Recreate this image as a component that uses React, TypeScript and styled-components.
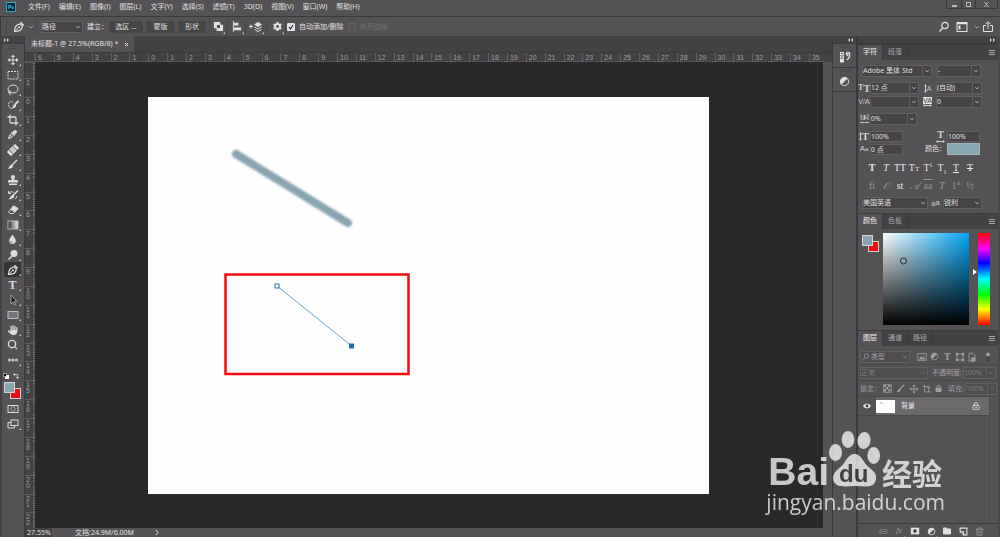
import React from "react";
import styled, { createGlobalStyle, css } from "styled-components";
import {
  FaBandage,
  FaDroplet,
  FaEyeDropper,
  FaFolder,
  FaGear,
  FaHand,
  FaLock,
} from "react-icons/fa6";
import { Crop, EllipsisIcon, Lasso, Link2, LockKeyhole, Search, Trash2 } from "lucide-react";

const c = {
  panel: "#545255",
  bar: "#434144",
  line: "#3b393c",
  field: "#454346",
  fieldLine: "#605e61",
  canvas: "#2a282b",
  text: "#e2e0e2",
  dim: "#a09ea1",
  faint: "#7d7b7e",
  swatch: "#88a5b2",
  red: "#f20a0c",
};

const Global = createGlobalStyle`
  *, *::before, *::after { box-sizing: border-box; }
  body {
    margin: 0;
    background: ${c.panel};
    color: ${c.text};
    font: 7px/12px "Noto Sans", "Noto Sans CJK SC", sans-serif;
  }
  button, input, select {
    font: inherit;
    color: inherit;
    margin: 0;
    padding: 0;
    border: 0;
    background: none;
    border-radius: 0;
  }
  svg { display: block; flex: none; }
`;

const Window = styled.div`
  position: relative;
  display: flex;
  flex-direction: column;
  min-height: 100vh;
  overflow: hidden;
`;

/* ---------- menu bar ---------- */

const MenuBar = styled.header`
  display: flex;
  align-items: center;
  height: 16px;
  padding-left: 6px;
  padding-bottom: 3px;
`;

const Menus = styled.nav`
  display: flex;
  flex: 1;
  gap: 9px;
  padding-left: 12px;
`;

const MenuItem = styled.button`
  white-space: nowrap;
  line-height: 12px;
`;

const WindowButtons = styled.div`
  display: flex;
  align-self: flex-start;
  height: 9px;
  margin-right: 2px;
  border: 1px solid ${c.line};
  border-top: 0;
`;

const WindowButton = styled.button<{ $w: number }>`
  display: grid;
  place-items: center;
  width: ${(p) => p.$w}px;
  color: #bab8bb;
  & + & {
    border-left: 1px solid ${c.line};
  }
`;

/* ---------- options bar ---------- */

const OptionsBar = styled.div`
  display: flex;
  align-items: center;
  height: 20px;
  padding: 0 6px 0 5px;
  border-top: 1px solid ${c.line};
  border-left: 1px solid ${c.line};
`;

const Divider = styled.span<{ $before?: number; $after?: number }>`
  width: 1px;
  height: 14px;
  margin: 0 ${(p) => p.$after ?? 0}px 0 ${(p) => p.$before ?? 0}px;
  background: #474548;
`;

const OptionButton = styled.button<{ $w: number }>`
  width: ${(p) => p.$w}px;
  height: 12px;
  margin-right: 3px;
  border: 1px solid #4a484b;
  border-radius: 1px;
  background: ${c.field};
  line-height: 10px;
  white-space: nowrap;
`;

const OptionLabel = styled.span`
  padding: 0 1px 0 4px;
  white-space: nowrap;
`;

const IconButton = styled.button<{ $w?: number; $dim?: boolean; $corner?: boolean }>`
  position: relative;
  display: grid;
  place-items: center;
  width: ${(p) => p.$w ?? 14}px;
  height: 14px;
  color: ${(p) => (p.$dim ? c.dim : "#e2e0e2")};
  ${(p) =>
    p.$corner &&
    css`
      &::after {
        content: "";
        position: absolute;
        right: 1px;
        bottom: 0;
        border: 1px solid;
        border-color: transparent #cfcdcf #cfcdcf transparent;
      }
    `}
`;

const CheckLabel = styled.label<{ $off?: boolean }>`
  display: flex;
  align-items: center;
  gap: 4px;
  margin-right: 4px;
  white-space: nowrap;
  color: ${(p) => (p.$off ? "#757376" : c.text)};
`;

const Check = styled.input`
  appearance: none;
  width: 8px;
  height: 8px;
  border: 1px solid #626063;
  border-radius: 1px;
  &:checked {
    border-color: #e6e4e6;
    background: #e6e4e6;
  }
`;

const CheckBox = styled.span`
  display: grid;
  > * {
    grid-area: 1 / 1;
  }
  svg {
    pointer-events: none;
  }
`;

const Spacer = styled.span`
  flex: 1;
`;

/* ---------- work area ---------- */

const Work = styled.div`
  flex: 1;
  display: grid;
  grid-template-columns: 25px minmax(0, 1fr) 24px 143px;
`;

const CollapseBar = styled.div<{ $end?: boolean }>`
  display: flex;
  align-items: center;
  justify-content: ${(p) => (p.$end ? "flex-end" : "flex-start")};
  height: 8px;
  flex: none;
  padding: 0 3px 0 2px;
  background: ${c.bar};
  border-bottom: 1px solid ${c.line};
`;

const ToolBox = styled.aside`
  display: flex;
  flex-direction: column;
  border-left: 2px solid ${c.bar};
  border-right: 1px solid ${c.line};
  background: ${c.panel};
`;

const Grip = styled.i`
  align-self: center;
  width: 10px;
  height: 3px;
  margin: 2px 0 3px;
  border: solid #49474a;
  border-width: 1px 0;
`;

const Tool = styled.button<{ $on?: boolean; $corner?: boolean }>`
  position: relative;
  display: grid;
  place-items: center;
  width: 17px;
  height: 15px;
  margin-left: 2px;
  border-radius: 1px;
  color: #dddbdd;
  background: ${(p) => (p.$on ? "#373538" : "none")};
  ${(p) =>
    p.$corner &&
    css`
      &::after {
        content: "";
        position: absolute;
        right: 0;
        bottom: 1px;
        border: 1px solid;
        border-color: transparent #cfcdcf #cfcdcf transparent;
      }
    `}
`;

const ToolLetter = styled.b`
  font: bold 12px/12px "Liberation Serif", serif;
`;

const HealingIcon = styled(FaBandage)`
  transform: rotate(-45deg);
`;

const SwatchPair = styled.div`
  display: grid;
  grid-template-columns: 6px 5px 6px;
  grid-template-rows: 6px 5px 6px;
  width: 17px;
  margin: 2px 0 2px 2px;
`;

const Swatch = styled.button<{ $front?: boolean }>`
  grid-area: ${(p) => (p.$front ? "1 / 1 / 3 / 3" : "2 / 2 / 4 / 4")};
  z-index: ${(p) => (p.$front ? 1 : 0)};
  border: 1px solid #cfd5d8;
  background: ${(p) => (p.$front ? c.swatch : c.red)};
`;

const MiniRow = styled.div`
  display: flex;
  justify-content: space-between;
  width: 16px;
  height: 9px;
  margin: 4px 0 0 1px;
  padding: 2px 0;
`;

/* ---------- document ---------- */

const DocumentArea = styled.main`
  display: flex;
  flex-direction: column;
  background: ${c.bar};
  border-right: 1px solid ${c.line};
`;

const DocumentTabs = styled.div`
  display: flex;
  height: 17px;
  border-bottom: 1px solid ${c.line};
`;

const DocumentTab = styled.div`
  display: flex;
  align-items: center;
  gap: 6px;
  padding: 0 5px 0 6px;
  background: ${c.panel};
  white-space: nowrap;
`;

const CloseButton = styled.button`
  display: grid;
  place-items: center;
  width: 5px;
  height: 10px;
`;

const View = styled.div`
  flex: 1;
  display: grid;
  grid-template-columns: 10px minmax(0, 1fr) 9px;
  grid-template-rows: 9px minmax(0, 1fr) 9px;
`;

const rulerText = css`
  color: #9d9b9e;
  font: 7px/6px "Liberation Sans", sans-serif;
`;

const TopRuler = styled.div`
  ${rulerText}
  display: flex;
`;

const TopCell = styled.span<{ $part?: number }>`
  flex: ${(p) => p.$part ?? 1} 1 0;
  min-width: 0;
  padding: 2px 0 0 2px;
  border-left: 1px solid #5f5d60;
  background: linear-gradient(to right, #777578 1px, transparent 1px) 0 100% / 12% 1px repeat-x;
`;

const LeftRuler = styled.div`
  ${rulerText}
  display: flex;
  flex-direction: column;
`;

const LeftCell = styled.span<{ $part?: number }>`
  display: flex;
  flex-direction: column;
  flex: ${(p) => p.$part ?? 1} 1 0;
  min-height: 0;
  overflow: hidden;
  padding: 1px 0 0 1px;
  border-top: 1px solid #5f5d60;
  background: linear-gradient(to bottom, #777578 1px, transparent 1px) 100% 0 / 2px 12% repeat-y;
`;

const RulerCorner = styled.span`
  border: dotted #5f5d60;
  border-width: 0 1px 1px 0;
`;

const ScrollTrack = styled.div`
  grid-row: 1 / 4;
  grid-column: 3;
  background: linear-gradient(${c.bar} 9px, ${c.panel} 9px);
`;

const Canvas = styled.div`
  overflow: hidden;
  padding: 35px 0 0 113px;
  background: ${c.canvas};
`;

const Paper = styled.svg`
  background: #fffeff;
`;

const StatusBar = styled.footer`
  grid-column: 1 / 3;
  display: flex;
  align-items: center;
  background: ${c.panel};
  overflow: hidden;
  line-height: 9px;
  white-space: nowrap;
`;

const ZoomField = styled.input`
  width: 27px;
  height: 9px;
  padding-left: 2px;
  background: ${c.bar};
`;

const DocumentInfo = styled.span`
  width: 78px;
  margin-left: 23px;
`;

/* ---------- right side ---------- */

const Dock = styled.aside`
  display: flex;
  flex-direction: column;
  border-right: 1px solid ${c.line};
  background: ${c.panel};
`;

const DockGroup = styled.div`
  display: flex;
  flex-direction: column;
  align-items: center;
  height: 24px;
  border-bottom: 1px solid ${c.line};
`;

const DockGrip = styled(Grip)`
  margin: 1px 0 2px;
`;

const Panels = styled.aside`
  display: flex;
  flex-direction: column;
  border-left: 1px solid ${c.line};
  border-right: 2px solid #49474a;
  background: ${c.panel};
`;

const TabRow = styled.div`
  display: flex;
  flex: none;
  height: 16px;
  background: ${c.bar};
  border-top: 1px solid ${c.line};
`;

const Tab = styled.button<{ $on?: boolean }>`
  padding: 0 5px 1px;
  color: ${(p) => (p.$on ? "#f4f2f4" : "#a9a7aa")};
  background: ${(p) => (p.$on ? c.panel : "none")};
  border-right: 1px solid ${c.line};
`;

const MenuButton = styled.button`
  display: grid;
  place-items: center;
  width: 7px;
  margin: 0 3px 0 auto;
  color: #a8a6a9;
`;

const CharacterBody = styled.div`
  display: flex;
  flex-direction: column;
  height: 153px;
  padding-top: 5px;
`;

const Row = styled.div<{ $after?: number }>`
  display: flex;
  align-items: center;
  height: 12px;
  margin-bottom: ${(p) => p.$after ?? 2}px;
`;

const FieldIcon = styled.span<{ $w?: number }>`
  display: grid;
  place-items: center;
  width: ${(p) => p.$w ?? 12}px;
  flex: none;
  color: #d2d0d2;
`;

const SelectBox = styled.span<{ $w: number; $dim?: boolean; $plain?: boolean }>`
  display: grid;
  grid-template-columns: minmax(0, 1fr) 9px;
  flex: none;
  width: ${(p) => p.$w}px;
  height: 12px;
  border: 1px solid ${c.fieldLine};
  background: ${(p) => (p.$dim ? "#4f4d50" : c.field)};
  color: ${(p) => (p.$dim ? c.faint : c.text)};
  select {
    grid-area: 1 / 1 / 2 / 3;
    appearance: none;
    min-width: 0;
    height: 10px;
    line-height: 10px;
  }
  svg {
    grid-area: 1 / 2;
    width: 9px;
    height: 10px;
    pointer-events: none;
    border-left: 1px solid ${(p) => (p.$plain ? "transparent" : "#5e5c5f")};
  }
`;

const TextField = styled.input<{ $w: number }>`
  width: ${(p) => p.$w}px;
  height: 11px;
  border: 1px solid ${c.fieldLine};
  background: ${c.field};
  line-height: 9px;
`;

const ColorField = styled.button`
  width: 33px;
  height: 12px;
  border: 1px solid #9fb4be;
  background: ${c.swatch};
`;

const GlyphRow = styled.div`
  display: flex;
  padding-left: 7px;
  height: 18px;
`;

const GlyphButton = styled.button<{ $on?: boolean; $bold?: boolean; $italic?: boolean; $line?: string }>`
  width: 14px;
  height: 14px;
  color: ${(p) => (p.$on ? "#e8e6e8" : "#99979a")};
  font: ${(p) => (p.$italic ? "italic" : "normal")} ${(p) => (p.$bold ? "bold" : "normal")} 10px/14px
    "Liberation Serif", "DejaVu Serif", serif;
  text-decoration: ${(p) => p.$line ?? "none"};
  white-space: nowrap;
  small {
    font-size: 7px;
  }
  sup,
  sub {
    font-size: 6px;
    line-height: 0;
  }
`;

const ColorBody = styled.div`
  display: flex;
  align-items: flex-start;
  height: 101px;
  padding: 4px 0 0 2px;
`;

const ColorField2D = styled.div`
  width: 86px;
  height: 92px;
  margin-left: 4px;
  background: linear-gradient(to bottom, transparent, #000), linear-gradient(to right, #fff, #00a6f6);
`;

const HueMarker = styled.div`
  padding: 36px 1px 0 4px;
`;

const HueSlider = styled.input`
  appearance: none;
  writing-mode: vertical-lr;
  width: 12px;
  height: 92px;
  background: linear-gradient(#f00, #f0f 17%, #00f 33%, #0ff 50%, #0f0 67%, #ff0 83%, #f00);
  &::-webkit-slider-thumb {
    appearance: none;
    width: 1px;
    height: 1px;
  }
`;

const LayerRows = styled.div`
  padding-top: 3px;
`;

const LayerRow = styled.div`
  display: flex;
  align-items: center;
  height: 16px;
  padding-left: 2px;
  border-bottom: 1px solid #49474a;
  color: ${c.dim};
  white-space: nowrap;
`;

const LayerList = styled.div`
  flex: 1;
  margin-right: 8px;
  border-right: 1px solid #4c4a4d;
`;

const Layer = styled.div`
  display: flex;
  align-items: center;
  height: 19px;
  background: #6b696c;
  border-bottom: 1px solid #49474a;
  color: #f0eef0;
`;

const Eye = styled.button`
  display: grid;
  place-items: center;
  width: 18px;
  height: 18px;
  background: ${c.panel};
`;

const LayerName = styled.span`
  flex: 1;
  padding-left: 6px;
`;

const LayerActions = styled.div`
  display: flex;
  justify-content: flex-end;
  gap: 2px;
  height: 14px;
  padding-right: 12px;
  border-top: 1px solid ${c.line};
`;

/* ---------- watermark ---------- */

const Watermark = styled.div`
  position: absolute;
  right: 55px;
  bottom: 20px;
  display: flex;
  flex-direction: column;
  align-items: flex-end;
  color: #fff;
  opacity: 0.74;
  pointer-events: none;
`;

const WatermarkLogo = styled.div`
  display: flex;
  align-items: baseline;
  height: 56px;
  padding-right: 3px;
  font: bold 39px/56px "Liberation Sans", sans-serif;
  svg {
    overflow: visible;
  }
  b {
    font: bold 30px/40px "Noto Sans CJK SC", sans-serif;
    padding-left: 2px;
  }
`;

const WatermarkUrl = styled.div`
  font: 21px/30px "Open Sans", sans-serif;
`;

/* ---------- glyphs ---------- */

const G = ({ s = 12, v = 12, children }: { s?: number; v?: number; children: React.ReactNode }) => (
  <svg width={s} height={s} viewBox={`0 0 ${v} ${v}`} fill="none" stroke="currentColor" strokeWidth="1" aria-hidden="true">
    {children}
  </svg>
);

const Chevron = () => (
  <G s={10} v={10}>
    <path d="M3 4l2 2 2-2" />
  </G>
);

const Double = ({ left }: { left?: boolean }) => (
  <svg width="5" height="4" viewBox="0 0 5 4" fill="#d8d6d8" aria-hidden="true">
    {left ? <path d="M2 0v4L0 2zM5 0v4L3 2z" /> : <path d="M0 0v4l2-2zM3 0v4l2-2z" />}
  </svg>
);

const PenGlyph = () => (
  <G>
    <path d="M1.500 10.500C1.500 6 3 3.500 7 2.800l2.300 2.300C9 9 6 10.500 1.500 10.500z" strokeWidth="1.200" />
    <path d="M1.500 10.500L5.500 6.700" />
    <path d="M7.500 1.300l3.200 3.200" strokeWidth="1.600" />
    <circle cx="6" cy="6.200" r="1" fill="currentColor" stroke="none" />
  </G>
);

const Burger = () => (
  <svg width="6" height="6" viewBox="0 0 6 6" fill="currentColor" aria-hidden="true">
    <path d="M0 0h6v1H0zM0 2h6v1H0zM0 4h6v1H0z" />
  </svg>
);

const HalfCircle = ({ s = 10 }: { s?: number }) => (
  <G s={s}>
    <circle cx="6" cy="6" r="4.500" />
    <path d="M9.500 2.500A5 5 0 0 0 2.500 9.500z" fill="currentColor" stroke="none" />
  </G>
);

const MoveGlyph = ({ s = 12 }: { s?: number }) => (
  <G s={s}>
    <path d="M6 2v8M2 6h8" />
    <path d="M6 .5l2 2.500H4zM6 11.500L4 9h4zM.5 6L3 4v4zM11.500 6L9 8V4z" fill="currentColor" stroke="none" />
  </G>
);

const BrushGlyph = ({ s = 12 }: { s?: number }) => (
  <G s={s}>
    <path d="M11 1L5.500 6.500" strokeWidth="1.600" />
    <path d="M5 6c1 .3 1.500 1 1.500 2C5.500 10.500 3 11 1 10.500 2.500 9.500 2.500 7 5 6z" fill="currentColor" stroke="none" />
  </G>
);

const tools: { name: string; corner?: boolean; on?: boolean; icon: React.ReactNode }[] = [
  { name: "移动", corner: true, icon: <MoveGlyph /> },
  { name: "矩形选框", corner: true, icon: <G><rect x="1" y="2.500" width="10" height="7.500" strokeDasharray="2 1" /></G> },
  { name: "套索", corner: true, icon: <Lasso size={12} strokeWidth={2} /> },
  {
    name: "快速选择",
    corner: true,
    icon: (
      <G>
        <path d="M6 3.500C4 1.500 1.500 3 1.500 5.500S3 10 5 9.500" strokeDasharray="1.500 .7" />
        <path d="M11.500 2L8 5.500" strokeWidth="1.800" />
        <path d="M8 5c1 .5 1.200 1.200 1 2-.8 2-2.500 2.500-4.500 2C6 8.200 6 5.800 8 5z" fill="currentColor" stroke="none" />
      </G>
    ),
  },
  { name: "裁剪", corner: true, icon: <Crop size={12} strokeWidth={2.600} /> },
  { name: "吸管", corner: true, icon: <FaEyeDropper size={9} /> },
  { name: "污点修复", corner: true, icon: <HealingIcon size={12} /> },
  { name: "画笔", corner: true, icon: <BrushGlyph s={11} /> },
  {
    name: "仿制图章",
    corner: true,
    icon: (
      <G>
        <path
          d="M6 1a2 2 0 0 1 2 2c0 1-.8 1.500-.8 3H10a1 1 0 0 1 1 1v1.500H1V7a1 1 0 0 1 1-1h2.800c0-1.500-.8-2-.8-3a2 2 0 0 1 2-2zM2 9.500h8V11H2z"
          fill="currentColor"
          stroke="none"
        />
      </G>
    ),
  },
  {
    name: "历史记录画笔",
    corner: true,
    icon: (
      <G>
        <path d="M1.500 2v2.500H4M2 4.200C3.500 2.500 5 2.500 6.500 3.500M9.500 7c.3 1.500-.5 2.500-1.500 3" />
        <path d="M11 1.500L6.500 6" strokeWidth="1.600" />
        <path d="M6 5.500c1 .3 1.500 1 1.300 2C6.500 9.500 4 10.500 1.500 10.200 3.500 9 3.500 6.500 6 5.500z" fill="currentColor" stroke="none" />
      </G>
    ),
  },
  {
    name: "橡皮擦",
    corner: true,
    icon: (
      <G>
        <path d="M6.500 2L11 4.500 6.500 9.500H3L1.500 8z" fill="none" />
        <path d="M6.500 2L11 4.500 8 8 3.700 5.300z" fill="currentColor" />
      </G>
    ),
  },
  {
    name: "渐变",
    corner: true,
    icon: (
      <G>
        <defs>
          <linearGradient id="ramp">
            <stop offset="0" stopColor="#2c2a2d" />
            <stop offset="1" stopColor="#f0eef0" />
          </linearGradient>
        </defs>
        <rect x="1" y="2" width="10" height="8" fill="url(#ramp)" stroke="#b9b7ba" />
      </G>
    ),
  },
  { name: "模糊", corner: true, icon: <FaDroplet size={9} /> },
  {
    name: "减淡",
    corner: true,
    icon: (
      <G>
        <circle cx="7" cy="4.500" r="3.500" fill="currentColor" stroke="none" />
        <path d="M5 7L1.500 10.500" strokeWidth="1.600" />
      </G>
    ),
  },
  { name: "钢笔", corner: true, on: true, icon: <PenGlyph /> },
  { name: "文字", corner: true, icon: <ToolLetter>T</ToolLetter> },
  {
    name: "路径选择",
    corner: true,
    icon: (
      <G>
        <path d="M4 1v9l2-2 1.500 3 1.200-.6L7.300 7.500h2.500z" fill="#1c1a1d" stroke="#b9b7ba" strokeWidth=".8" />
      </G>
    ),
  },
  { name: "矩形", corner: true, icon: <G><rect x="1" y="2.500" width="10" height="7" fill="#77757a" stroke="#bdbbbe" /></G> },
  { name: "抓手", corner: true, icon: <FaHand size={10} /> },
  { name: "缩放", icon: <Search size={11} strokeWidth={3} /> },
  { name: "编辑工具栏", corner: true, icon: <EllipsisIcon size={12} strokeWidth={4} /> },
];

const menus = ["文件(F)", "编辑(E)", "图像(I)", "图层(L)", "文字(Y)", "选择(S)", "滤镜(T)", "3D(D)", "视图(V)", "窗口(W)", "帮助(H)"];

const topMarks = [...Array.from({ length: 6 }, (_, i) => 6 - i), ...Array.from({ length: 36 }, (_, i) => i)];
const leftMarks = ["", "1", ...Array.from({ length: 23 }, (_, i) => String(i))];

function Select({ w, label, value, dim, plain }: { w: number; label: string; value: string; dim?: boolean; plain?: boolean }) {
  return (
    <SelectBox $w={w} $dim={dim} $plain={plain}>
      <select aria-label={label} defaultValue={value}>
        <option>{value}</option>
      </select>
      <Chevron />
    </SelectBox>
  );
}

function Swatches() {
  return (
    <SwatchPair>
      <Swatch $front aria-label="前景色" />
      <Swatch aria-label="背景色" />
    </SwatchPair>
  );
}

function Tabs({ names }: { names: string[] }) {
  return (
    <TabRow role="tablist">
      {names.map((n, i) => (
        <Tab key={n} role="tab" aria-selected={i === 0} $on={i === 0}>
          {n}
        </Tab>
      ))}
      <MenuButton aria-label="面板菜单">
        <Burger />
      </MenuButton>
    </TabRow>
  );
}

function TopBars() {
  return (
    <>
      <MenuBar>
        <svg width="10" height="10" viewBox="0 0 10 10" aria-hidden="true">
          <rect x=".5" y=".5" width="9" height="9" fill="#0b2532" stroke="#2fa3c8" />
          <text x="2" y="7" fontSize="5" fontWeight="bold" fontFamily="Liberation Sans, sans-serif" fill="#45c3ea">
            Ps
          </text>
        </svg>
        <Menus>
          {menus.map((m) => (
            <MenuItem key={m}>{m}</MenuItem>
          ))}
        </Menus>
        <WindowButtons>
          <WindowButton $w={14} aria-label="最小化">
            <G s={7} v={7}><path d="M1 5h5" strokeWidth="2" /></G>
          </WindowButton>
          <WindowButton $w={14} aria-label="最大化">
            <G s={7} v={7}><rect x="1.500" y="1.500" width="4" height="4" /></G>
          </WindowButton>
          <WindowButton $w={22} aria-label="关闭">
            <G s={7} v={7}><path d="M1.500 1l4 5M5.500 1l-4 5" /></G>
          </WindowButton>
        </WindowButtons>
      </MenuBar>
      <OptionsBar>
        <Divider $after={5} />
        <IconButton aria-label="钢笔工具"><PenGlyph /></IconButton>
        <IconButton $w={10} $dim aria-label="工具预设"><Chevron /></IconButton>
        <Divider $after={4} />
        <Select w={42} label="工具模式" value="路径" plain />
        <OptionLabel>建立：</OptionLabel>
        <OptionButton $w={34}>选区 ...</OptionButton>
        <OptionButton $w={29}>蒙版</OptionButton>
        <OptionButton $w={28}>形状</OptionButton>
        <Divider $after={1} />
        <IconButton $w={15} $corner aria-label="路径操作">
          <G s={11}>
            <path d="M1 1h7v3h3v7H4V8H1z" fill="currentColor" stroke="none" />
            <rect x="4.500" y="4.500" width="3" height="3" fill="#3b393c" stroke="none" />
          </G>
        </IconButton>
        <Divider $before={1} $after={2} />
        <IconButton $w={15} $corner aria-label="路径对齐方式">
          <G s={11}>
            <path d="M1.500 0v12" />
            <path d="M2 2h5v3H2zM2 7h8v3H2z" fill="currentColor" stroke="none" />
          </G>
        </IconButton>
        <Divider $after={1} />
        <IconButton $w={18} $corner aria-label="路径排列方式">
          <svg width="14" height="12" viewBox="0 0 14 12" fill="none" stroke="currentColor" aria-hidden="true">
            <path d="M0 5.500h4M2 3.500v4" />
            <path d="M5 3.500L9 1l4 2.500L9 6z" fill="currentColor" stroke="none" />
            <path d="M5.500 6L9 8l3.500-2M5.500 8.500L9 10.500l3.500-2" />
          </svg>
        </IconButton>
        <Divider $before={1} $after={2} />
        <IconButton $w={16} $corner aria-label="几何选项"><FaGear size={9} /></IconButton>
        <Divider $after={1} />
        <CheckLabel>
          <CheckBox>
            <Check type="checkbox" defaultChecked />
            <G s={8} v={8}><path d="M2 4l1.500 2L6 2" stroke="#2c2a2d" strokeWidth="1.200" /></G>
          </CheckBox>
          自动添加/删除
        </CheckLabel>
        <CheckLabel $off>
          <Check type="checkbox" disabled />
          对齐边缘
        </CheckLabel>
        <Spacer />
        <IconButton $w={16} aria-label="搜索">
          <G><circle cx="7" cy="4.500" r="3.200" strokeWidth="1.200" /><path d="M4.700 7L1.500 10.500" strokeWidth="1.400" /></G>
        </IconButton>
        <IconButton $w={20} aria-label="工作区">
          <G><rect x="1" y="1.500" width="10" height="9" /><path d="M1 2.500h10" strokeWidth="1.500" /><path d="M2.500 4.500h2v4h-2z" fill="currentColor" stroke="none" /></G>
        </IconButton>
        <IconButton $w={10} $dim aria-label="工作区菜单"><Chevron /></IconButton>
        <IconButton $w={12} aria-label="共享">
          <G><path d="M4 4.500H1.500v6h9v-6H8M6 8V1M3.800 3L6 .8 8.200 3" /></G>
        </IconButton>
      </OptionsBar>
    </>
  );
}

function ToolColumn() {
  return (
    <ToolBox>
      <CollapseBar><Double /></CollapseBar>
      <Grip />
      {tools.map((t) => (
        <Tool key={t.name} aria-label={t.name} $corner={t.corner} $on={t.on}>
          {t.icon}
        </Tool>
      ))}
      <MiniRow>
        <svg width="6" height="6" viewBox="0 0 6 6" aria-hidden="true">
          <path d="M2 2h4v4H2z" fill="#fff" />
          <path d="M.5.5h3v3h-3z" fill="#111" stroke="#ddd" strokeWidth=".6" />
        </svg>
        <svg width="6" height="6" viewBox="0 0 6 6" fill="none" stroke="#dddbdd" aria-hidden="true">
          <path d="M1 1.500h3.500V5M2 0L.5 1.500 2 3M3 4l1.500 1.500L6 4" strokeWidth=".8" />
        </svg>
      </MiniRow>
      <Swatches />
      <Tool aria-label="快速蒙版">
        <G><rect x="1" y="2.500" width="10" height="7" /><circle cx="6" cy="6" r="2.200" strokeDasharray="1 .5" /></G>
      </Tool>
      <Tool aria-label="屏幕模式" $corner>
        <G><rect x="4" y="2" width="7" height="5.500" /><path d="M4 4.500H1v5.500h6.500V7.500" /></G>
      </Tool>
    </ToolBox>
  );
}

function DocumentView() {
  return (
    <DocumentArea>
      <DocumentTabs>
        <DocumentTab>
          未标题-1 @ 27.5%(RGB/8) *
          <CloseButton aria-label="关闭文档"><G s={5} v={5}><path d="M1 1l3 3M4 1L1 4" /></G></CloseButton>
        </DocumentTab>
      </DocumentTabs>
      <View>
        <RulerCorner />
        <TopRuler>
          {topMarks.map((n, i) => (
            <TopCell key={i} $part={i === 41 ? 0.69 : 1}>{n}</TopCell>
          ))}
        </TopRuler>
        <ScrollTrack />
        <LeftRuler>
          {leftMarks.map((n, i) => (
            <LeftCell key={i} $part={i === 0 ? 0.85 : i === 24 ? 0.8 : 1}>
              {n.split("").map((d, j) => (
                <span key={j}>{d}</span>
              ))}
            </LeftCell>
          ))}
        </LeftRuler>
        <Canvas>
          <Paper width="561" height="397" viewBox="0 0 561 397" role="img" aria-label="背景">
            <defs>
              <filter id="soft" x="-10%" y="-10%" width="120%" height="120%">
                <feGaussianBlur stdDeviation="1.300" />
              </filter>
            </defs>
            <path d="M88 57L200 126" stroke={c.swatch} strokeWidth="8" strokeLinecap="round" filter="url(#soft)" />
            <rect x="77.500" y="177.500" width="183" height="99.500" fill="none" stroke={c.red} strokeWidth="2.500" />
            <path d="M129 189L203 248.500" stroke="#4f9cc4" strokeWidth=".9" />
            <rect x="127" y="187" width="4" height="4" fill="#fff" stroke="#2a72ad" />
            <rect x="201" y="246.500" width="5" height="5" fill="#1f6db5" />
          </Paper>
        </Canvas>
        <StatusBar>
          <ZoomField aria-label="缩放比例" defaultValue="27.55%" />
          <DocumentInfo>文档:24.9M/6.00M</DocumentInfo>
          <G s={7} v={7}><path d="M3 1l2 2.500L3 6" /></G>
        </StatusBar>
      </View>
    </DocumentArea>
  );
}

function DockColumn() {
  return (
    <Dock>
      <CollapseBar $end><Double left /></CollapseBar>
      <DockGroup>
        <DockGrip />
        <IconButton aria-label="历史记录">
          <G>
            <path d="M1 1h4v3H1zM1 4.500h4v3H1zM1 8h4v3.500H1z" fill="currentColor" stroke="none" />
            <path d="M2 2h2v1H2zM2 5.500h2v1H2z" fill="#545255" stroke="none" />
            <path d="M7 2h3.500v3c0 2-1 3-2.500 4M9 5L7 2.500" strokeWidth="1.400" />
          </G>
        </IconButton>
      </DockGroup>
      <DockGroup>
        <DockGrip />
        <IconButton aria-label="调整"><HalfCircle s={11} /></IconButton>
      </DockGroup>
    </Dock>
  );
}

const SmallType = styled.span<{ $size?: number; $serif?: boolean }>`
  font: ${(p) => (p.$serif ? "bold" : "normal")} ${(p) => p.$size ?? 8}px/10px
    ${(p) => (p.$serif ? '"Liberation Serif", serif' : '"Liberation Sans", sans-serif')};
`;

const Tracked = styled(SmallType)<{ $box?: boolean }>`
  line-height: 7px;
  font-size: 7px;
  color: ${(p) => (p.$box ? "#3b393c" : "inherit")};
  background: ${(p) => (p.$box ? "#e2e0e2" : "none")};
`;

const Pair = styled.span<{ $column?: boolean }>`
  display: flex;
  flex-direction: ${(p) => (p.$column ? "column" : "row")};
  align-items: center;
  line-height: 8px;
`;

const UpDown = () => (
  <svg width="3" height="9" viewBox="0 0 3 9" fill="none" stroke="currentColor" aria-hidden="true">
    <path d="M1.500 1v7" />
    <path d="M1.500 0L3 2.500H0zM1.500 9L0 6.500h3z" fill="currentColor" stroke="none" />
  </svg>
);

const Arrow = () => (
  <svg width="9" height="3" viewBox="0 0 9 3" fill="currentColor" aria-hidden="true">
    <path d="M0 1.500L2 0v1h5V0l2 1.500L7 3V2H2v1z" />
  </svg>
);

const TsumeGlyph = () => (
  <svg width="9" height="10" viewBox="0 0 9 10" fill="none" stroke="currentColor" aria-hidden="true">
    <path d="M1 0v6M8 0v6M2.500 2h4M4.500 1v5M6 3c-1 2.500-3.500 3.500-3.500 1.500S7 3 6.500 5" strokeWidth=".8" />
    <path d="M0 8.500h9M2 7.500v2M7 7.500v2" strokeWidth=".8" />
  </svg>
);

function CharacterPanel() {
  return (
    <section>
      <Tabs names={["字符", "段落"]} />
      <CharacterBody>
        <Row $after={5}>
          <FieldIcon $w={4} />
          <Select w={70} label="字体" value="Adobe 黑体 Std" />
          <FieldIcon $w={5} />
          <Select w={44} label="字体样式" value="-" />
        </Row>
        <Row>
          <FieldIcon><Pair><SmallType $serif $size={8}>T</SmallType><SmallType $serif $size={11}>T</SmallType></Pair></FieldIcon>
          <Select w={49} label="字体大小" value="12 点" />
          <FieldIcon $w={17}>
            <Pair><UpDown /><Tracked>A</Tracked></Pair>
          </FieldIcon>
          <Select w={46} label="行距" value="(自动)" />
        </Row>
        <Row $after={5}>
          <FieldIcon><SmallType $size={7}>V/A</SmallType></FieldIcon>
          <Select w={49} label="字距微调" value="" />
          <FieldIcon $w={17}><Pair $column><Tracked $box>VA</Tracked><Arrow /></Pair></FieldIcon>
          <Select w={46} label="字距" value="0" />
        </Row>
        <Row $after={5}>
          <FieldIcon><TsumeGlyph /></FieldIcon>
          <Select w={47} label="比例间距" value="0%" />
        </Row>
        <Row $after={1}>
          <FieldIcon><Pair><UpDown /><SmallType $serif $size={11}>T</SmallType></Pair></FieldIcon>
          <TextField $w={33} aria-label="垂直缩放" defaultValue="100%" />
          <Spacer />
          <FieldIcon $w={13}><Pair $column><SmallType $serif $size={10}>T</SmallType><Arrow /></Pair></FieldIcon>
          <TextField $w={33} aria-label="水平缩放" defaultValue="100%" />
          <FieldIcon $w={18} />
        </Row>
        <Row $after={6}>
          <FieldIcon><Pair><SmallType>A</SmallType><SmallType $size={6}>a</SmallType></Pair></FieldIcon>
          <TextField $w={33} aria-label="基线偏移" defaultValue="0 点" />
          <Spacer />
          <OptionLabel>颜色：</OptionLabel>
          <ColorField aria-label="文本颜色" />
          <FieldIcon $w={18} />
        </Row>
        <GlyphRow>
          <GlyphButton $on $bold>T</GlyphButton>
          <GlyphButton $on $italic>T</GlyphButton>
          <GlyphButton $on>TT</GlyphButton>
          <GlyphButton $on>T<small>T</small></GlyphButton>
          <GlyphButton $on>T<sup>1</sup></GlyphButton>
          <GlyphButton $on>T<sub>1</sub></GlyphButton>
          <GlyphButton $on $line="underline">T</GlyphButton>
          <GlyphButton $on $line="line-through">T</GlyphButton>
        </GlyphRow>
        <GlyphRow>
          <GlyphButton>fi</GlyphButton>
          <GlyphButton $italic>&#x1D4AA;</GlyphButton>
          <GlyphButton $on>st</GlyphButton>
          <GlyphButton $italic>&#x1D49C;</GlyphButton>
          <GlyphButton $line="overline">aa</GlyphButton>
          <GlyphButton $italic>T</GlyphButton>
          <GlyphButton>1<sup>st</sup></GlyphButton>
          <GlyphButton>½</GlyphButton>
        </GlyphRow>
        <Row>
          <FieldIcon $w={4} />
          <Select w={66} label="语言" value="美国英语" plain />
          <FieldIcon $w={15}><Pair><Tracked>a</Tracked><SmallType $size={8}>a</SmallType></Pair></FieldIcon>
          <Select w={39} label="消除锯齿" value="锐利" plain />
        </Row>
      </CharacterBody>
    </section>
  );
}

function ColorPanel() {
  return (
    <section>
      <Tabs names={["颜色", "色板"]} />
      <ColorBody>
        <Swatches />
        <ColorField2D>
          <svg width="86" height="92" viewBox="0 0 86 92" aria-hidden="true">
            <circle cx="20.500" cy="28" r="3" fill="none" stroke="#1f2b33" />
          </svg>
        </ColorField2D>
        <HueMarker>
          <svg width="4" height="6" viewBox="0 0 4 6" fill="#fff" aria-hidden="true"><path d="M0 0l4 3-4 3z" /></svg>
        </HueMarker>
        <HueSlider type="range" aria-label="色相" />
      </ColorBody>
    </section>
  );
}

const LayersSection = styled.section`
  flex: 1;
  display: flex;
  flex-direction: column;
`;

const FilterBox = styled(SelectBox)`
  grid-template-columns: 10px minmax(0, 1fr) 9px;
  color: ${c.dim};
  margin-right: 6px;
  select {
    grid-area: 1 / 2 / 2 / 4;
  }
  svg {
    grid-area: 1 / 3;
  }
  > svg:first-child {
    grid-area: 1 / 1;
    border: 0;
  }
`;

function LayersPanel() {
  return (
    <LayersSection>
      <Tabs names={["图层", "通道", "路径"]} />
      <LayerRows>
        <LayerRow>
          <FilterBox $w={50} $dim $plain>
            <G><circle cx="7.500" cy="4.500" r="3" /><path d="M5.500 7L2.500 10.500" /></G>
            <select aria-label="图层过滤" defaultValue="类型"><option>类型</option></select>
            <Chevron />
          </FilterBox>
          <IconButton $dim aria-label="像素图层">
            <G s={10}><rect x="1" y="2" width="10" height="8" /><path d="M2 9l3-4 2 2 1.500-1.500L10 9z" fill="currentColor" stroke="none" /></G>
          </IconButton>
          <IconButton $dim aria-label="调整图层"><HalfCircle s={9} /></IconButton>
          <IconButton $dim aria-label="文字图层"><SmallType $serif $size={10}>T</SmallType></IconButton>
          <IconButton $dim aria-label="形状图层">
            <G s={10}><rect x="2.500" y="2.500" width="7" height="7" /><path d="M1 1h3v3H1zM8 1h3v3H8zM1 8h3v3H1zM8 8h3v3H8z" fill="currentColor" stroke="none" /></G>
          </IconButton>
          <IconButton $dim aria-label="智能对象">
            <G s={10}><path d="M2.500 11V1.500H7L9.500 4v7z" /><path d="M5 6.500h5V11H5z" fill="currentColor" stroke="none" /></G>
          </IconButton>
          <IconButton $w={22} $dim aria-label="过滤开关">
            <G s={10}><rect x="4" y="3" width="4" height="8" fill="#434144" stroke="none" /><circle cx="6" cy="3" r="2.500" fill="currentColor" stroke="none" /></G>
          </IconButton>
        </LayerRow>
        <LayerRow>
          <Select w={68} label="混合模式" value="正常" dim plain />
          <OptionLabel>不透明度:</OptionLabel>
          <Select w={33} label="不透明度" value="100%" dim />
        </LayerRow>
        <LayerRow>
          <span>锁定：</span>
          <IconButton $w={13} $dim aria-label="锁定透明像素">
            <G s={9}><rect x="1" y="1" width="10" height="10" /><path d="M1 1h3v3H1zM7 1h3v3H7zM4 4h3v3H4zM1 7h3v3H1zM7 7h3v3H7z" fill="currentColor" stroke="none" /></G>
          </IconButton>
          <IconButton $w={13} $dim aria-label="锁定图像像素"><BrushGlyph s={9} /></IconButton>
          <IconButton $w={13} $dim aria-label="锁定位置"><MoveGlyph s={10} /></IconButton>
          <IconButton $w={13} $dim aria-label="锁定画板">
            <G s={10}><path d="M1 3h7v7M3 1v8.500h8" /><path d="M6 5l2-2 2 2" /></G>
          </IconButton>
          <IconButton $w={11} $dim aria-label="锁定全部"><FaLock size={7} /></IconButton>
          <OptionLabel>填充:</OptionLabel>
          <Select w={32} label="填充" value="100%" dim />
        </LayerRow>
      </LayerRows>
      <LayerList>
        <Layer>
          <Eye aria-label="显示图层">
            <G s={8} v={8}><path d="M.5 4C2 1.500 6 1.500 7.500 4 6 6.500 2 6.500.5 4z" fill="currentColor" /><circle cx="4" cy="4" r="1.400" fill="#3b393c" stroke="none" /></G>
          </Eye>
          <svg width="19" height="13" viewBox="0 0 19 13" aria-hidden="true">
            <rect width="19" height="13" fill="#fff" />
            <path d="M3.500 2l3.500 2" stroke="#a8bac3" />
          </svg>
          <LayerName>背景</LayerName>
          <IconButton $w={26} aria-label="图层已锁定"><LockKeyhole size={8} strokeWidth={2.500} /></IconButton>
        </Layer>
      </LayerList>
      <LayerActions>
        <IconButton $dim aria-label="链接图层"><Link2 size={9} /></IconButton>
        <IconButton $dim $corner aria-label="图层样式"><em>fx</em></IconButton>
        <IconButton aria-label="添加蒙版">
          <G s={10}><path d="M1 2h10v8H1z" fill="currentColor" stroke="none" /><circle cx="6" cy="6" r="2.200" fill="#3b393c" stroke="none" /></G>
        </IconButton>
        <IconButton $corner aria-label="新建调整图层"><HalfCircle s={9} /></IconButton>
        <IconButton aria-label="新建组"><FaFolder size={8} /></IconButton>
        <IconButton aria-label="新建图层">
          <G s={9}><path d="M1.500 1.500h9v9H6v-4H1.500z" strokeWidth="1.500" /><path d="M1.500 7L6 10.500" /></G>
        </IconButton>
        <IconButton $dim aria-label="删除图层"><Trash2 size={9} /></IconButton>
      </LayerActions>
    </LayersSection>
  );
}

function Brand() {
  return (
    <Watermark>
      <WatermarkLogo>
        <span>Bai</span>
        <svg width="51" height="54" viewBox="0 0 51 54" fill="#fff" aria-hidden="true">
          <ellipse cx="6.500" cy="21.500" rx="6.500" ry="8.500" />
          <ellipse cx="19" cy="8.500" rx="6.300" ry="8.500" />
          <ellipse cx="35" cy="9.500" rx="6.500" ry="8.500" transform="rotate(8 35 9.500)" />
          <ellipse cx="44.700" cy="24.500" rx="6.300" ry="8.500" />
          <path d="M25.500 23C32 23 34 31 39 35.500c5 4 9 7 8 13C45 58 35 55 26 55S6 58 4 48c0-6 4-9 8-12.500C17 31 19 23 25.500 23z" />
          <text x="10" y="51" fontSize="24" fontWeight="bold" fontFamily="Liberation Sans, sans-serif" fill="#3f3d40">
            du
          </text>
        </svg>
        <b>经验</b>
      </WatermarkLogo>
      <WatermarkUrl>jingyan.baidu.com</WatermarkUrl>
    </Watermark>
  );
}

export default function App() {
  return (
    <Window>
      <Global />
      <TopBars />
      <Work>
        <ToolColumn />
        <DocumentView />
        <DockColumn />
        <Panels>
          <CollapseBar $end><Double /></CollapseBar>
          <CharacterPanel />
          <ColorPanel />
          <LayersPanel />
        </Panels>
      </Work>
      <Brand />
    </Window>
  );
}
